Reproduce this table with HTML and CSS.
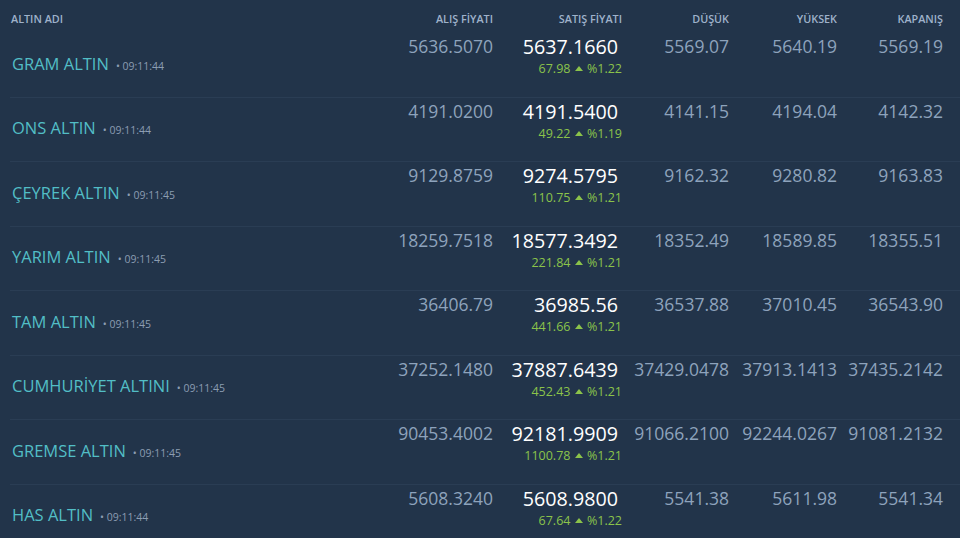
FILE: index.html
```html
<!DOCTYPE html>
<html lang="tr">
<head>
    <meta charset="UTF-8">
    <meta name="viewport" content="width=device-width, initial-scale=1.0">
    <title>Altın Fiyatları</title>
    <link rel="stylesheet" href="styles.css">
</head>
<body>
    <div class="gold-table">
        <div class="row head">
            <div class="name-col">ALTIN ADI</div>
            <div>ALIŞ FİYATI</div>
            <div>SATIŞ FİYATI</div>
            <div>DÜŞÜK</div>
            <div>YÜKSEK</div>
            <div>KAPANIŞ</div>
        </div>

        <div class="row item">
            <div class="name-col"><span class="name">GRAM ALTIN</span><span class="time">• 09:11:44</span></div>
            <div class="val">5636.5070</div>
            <div class="sell"><span class="big">5637.1660</span><span class="change">67.98 <i class="up"></i> %1.22</span></div>
            <div class="val">5569.07</div>
            <div class="val">5640.19</div>
            <div class="val">5569.19</div>
        </div>

        <div class="row item">
            <div class="name-col"><span class="name">ONS ALTIN</span><span class="time">• 09:11:44</span></div>
            <div class="val">4191.0200</div>
            <div class="sell"><span class="big">4191.5400</span><span class="change">49.22 <i class="up"></i> %1.19</span></div>
            <div class="val">4141.15</div>
            <div class="val">4194.04</div>
            <div class="val">4142.32</div>
        </div>

        <div class="row item">
            <div class="name-col"><span class="name">ÇEYREK ALTIN</span><span class="time">• 09:11:45</span></div>
            <div class="val">9129.8759</div>
            <div class="sell"><span class="big">9274.5795</span><span class="change">110.75 <i class="up"></i> %1.21</span></div>
            <div class="val">9162.32</div>
            <div class="val">9280.82</div>
            <div class="val">9163.83</div>
        </div>

        <div class="row item">
            <div class="name-col"><span class="name">YARIM ALTIN</span><span class="time">• 09:11:45</span></div>
            <div class="val">18259.7518</div>
            <div class="sell"><span class="big">18577.3492</span><span class="change">221.84 <i class="up"></i> %1.21</span></div>
            <div class="val">18352.49</div>
            <div class="val">18589.85</div>
            <div class="val">18355.51</div>
        </div>

        <div class="row item">
            <div class="name-col"><span class="name">TAM ALTIN</span><span class="time">• 09:11:45</span></div>
            <div class="val">36406.79</div>
            <div class="sell"><span class="big">36985.56</span><span class="change">441.66 <i class="up"></i> %1.21</span></div>
            <div class="val">36537.88</div>
            <div class="val">37010.45</div>
            <div class="val">36543.90</div>
        </div>

        <div class="row item">
            <div class="name-col"><span class="name">CUMHURİYET ALTINI</span><span class="time">• 09:11:45</span></div>
            <div class="val">37252.1480</div>
            <div class="sell"><span class="big">37887.6439</span><span class="change">452.43 <i class="up"></i> %1.21</span></div>
            <div class="val">37429.0478</div>
            <div class="val">37913.1413</div>
            <div class="val">37435.2142</div>
        </div>

        <div class="row item">
            <div class="name-col"><span class="name">GREMSE ALTIN</span><span class="time">• 09:11:45</span></div>
            <div class="val">90453.4002</div>
            <div class="sell"><span class="big">92181.9909</span><span class="change">1100.78 <i class="up"></i> %1.21</span></div>
            <div class="val">91066.2100</div>
            <div class="val">92244.0267</div>
            <div class="val">91081.2132</div>
        </div>

        <div class="row item">
            <div class="name-col"><span class="name">HAS ALTIN</span><span class="time">• 09:11:44</span></div>
            <div class="val">5608.3240</div>
            <div class="sell"><span class="big">5608.9800</span><span class="change">67.64 <i class="up"></i> %1.22</span></div>
            <div class="val">5541.38</div>
            <div class="val">5611.98</div>
            <div class="val">5541.34</div>
        </div>
    </div>
</body>
</html>
```

FILE: styles.css
```css
/* Gold price table */
body {
    margin: 0;
    padding: 0;
    background-color: #22344a; /* Dark navy background */
    font-family: "Open Sans", "Liberation Sans", sans-serif;
    overflow: hidden;
}
.gold-table {
    width: 960px;
}
.row {
    display: grid;
    grid-template-columns: 1fr 130px 129px 107px 108px 106px;
    padding-right: 17px;
}
.head {
    height: 33px;
    box-sizing: border-box;
    padding-top: 13px;
    font-size: 10.8px;
    line-height: 12px;
    font-weight: 600;
    color: #9fb2ca; /* Muted blue header text */
    text-align: right;
}
.head .name-col {
    text-align: left;
    padding-left: 11px;
}
.item {
    height: 64.5px;
    box-sizing: border-box;
    border-bottom: 1px solid #2a3d54;
    margin-left: 10px;
    text-align: right;
}
.item .name-col {
    text-align: left;
    align-self: center;
    margin-left: 2px;
    margin-bottom: 3px;
    display: flex;
    align-items: baseline;
}
.name {
    font-size: 16.5px;
    color: #52bec6; /* Teal name */
}
.time {
    font-size: 10.5px;
    color: #8c9db2;
    margin-left: 7px;
}
.val {
    font-size: 17.5px;
    line-height: 20px;
    padding-top: 3px;
    color: #8ea3bc;
}
.sell {
    display: flex;
    flex-direction: column;
    align-items: flex-end;
}
.big {
    font-size: 19.7px;
    line-height: 22px;
    padding-top: 3px;
    padding-right: 4px;
    color: #ffffff;
}
.change {
    font-size: 12.5px;
    line-height: 16px;
    margin-top: 3px;
    color: #8bc34a; /* Green change */
}
.up {
    display: inline-block;
    width: 0;
    height: 0;
    border-left: 4px solid transparent;
    border-right: 4px solid transparent;
    border-bottom: 5px solid #8bc34a;
    vertical-align: 2px;
    margin: 0 1px;
}
```
